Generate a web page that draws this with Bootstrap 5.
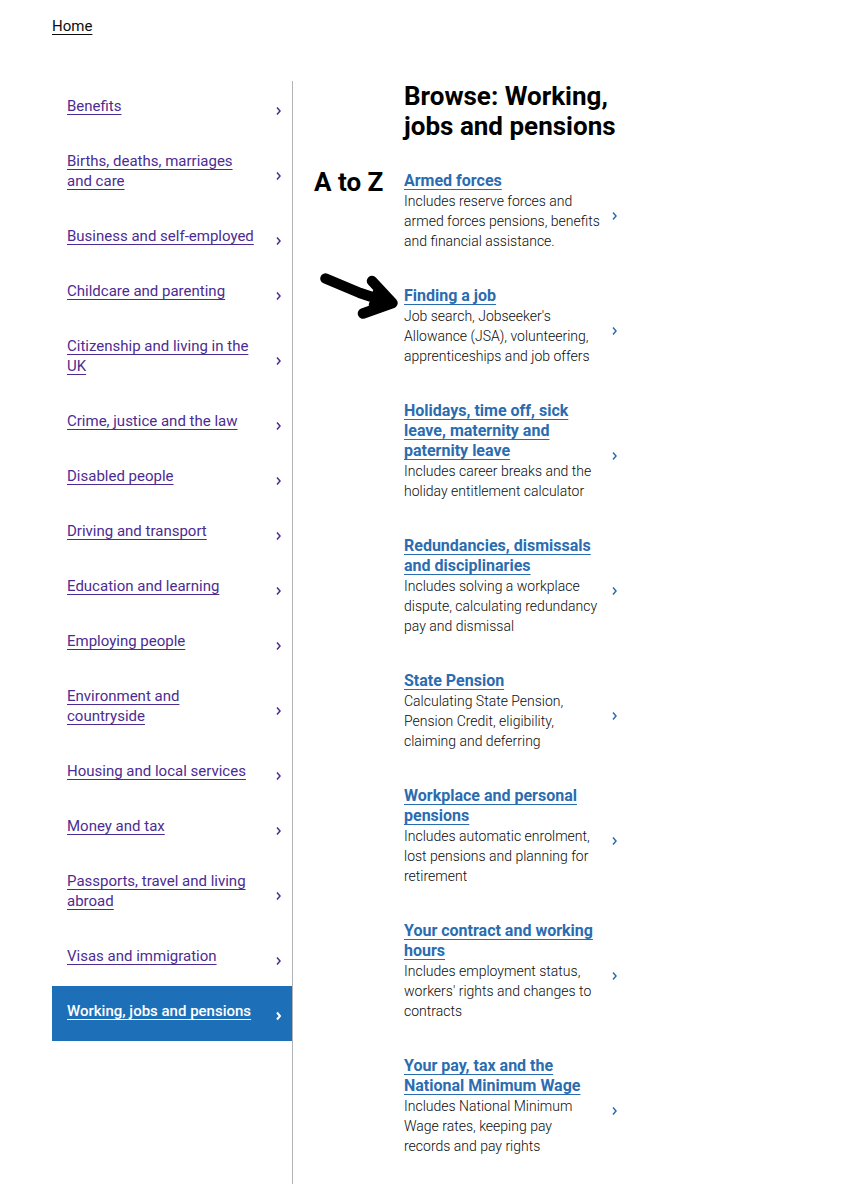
<!DOCTYPE html>
<html lang="en">
<head>
<meta charset="utf-8">
<meta name="viewport" content="width=device-width, initial-scale=1">
<title>Browse: Working, jobs and pensions</title>
<link href="https://cdn.jsdelivr.net/npm/bootstrap@5.3.0/dist/css/bootstrap.min.css" rel="stylesheet">
<style>
  body { font-family: Roboto, "Liberation Sans", sans-serif; font-size: 15px; line-height: 20px; color: #0b0c0c; background: #fff; }
  a { text-decoration: underline; text-decoration-thickness: 1px; text-underline-offset: 3px; text-decoration-skip-ink: none; }
  .crumbs { padding: 16px 52px 0; margin-bottom: 45px; }
  .crumbs a { color: #0b0c0c; }
  .browse { display: grid; grid-template-columns: minmax(0, 241fr) minmax(0, 111fr) minmax(0, 216fr) minmax(0, 225fr); margin-left: 52px; }
  .sections { border-right: 1px solid #b1b4b6; }
  .entry { display: flex; align-items: center; justify-content: space-between; padding: 15px 10px 20px 15px; }
  .entry svg { flex: none; width: 6px; height: 10px; margin-top: 10px; fill: none; stroke: currentColor; stroke-width: 1.5; }
  .sections .entry, .sections a { color: #4c2c92; }
  .sections .entry.current { background: #1d70b8; font-weight: 500; }
  .sections .current, .sections .current a { color: #fff; }
  .sections .current svg { stroke-width: 2; }
  .topics .entry { color: #2b6cb0; padding-left: 0; padding-right: 2px; }
  .topics a { color: #2b6cb0; font-size: 16px; font-weight: 700; }
  .topics p { color: #0b0c0c; font-size: 14px; font-weight: 300; white-space: nowrap; }
  .topics ul { padding-top: 15px; }
  .entry-text { min-width: 0; }
  h1, h2 { font-size: 26px; line-height: 30px; font-weight: 700; color: #000; }
  .aside-notes { padding: 86px 4px 0 21px; }
  .arrow { width: 82px; height: 50px; margin-top: 73px; margin-left: 4px; }
</style>
</head>
<body>
<nav class="crumbs" aria-label="Breadcrumb"><a href="#">Home</a></nav>
<main class="browse">
  <nav class="sections" aria-label="All topics">
    <ul class="list-unstyled mb-0">
      <li class="entry"><a href="#">Benefits</a><svg viewBox="0 0 6 10"><path d="M1 1.500 4 5 1 8.500"/></svg></li>
      <li class="entry"><a href="#">Births, deaths, marriages<br>and care</a><svg viewBox="0 0 6 10"><path d="M1 1.500 4 5 1 8.500"/></svg></li>
      <li class="entry"><a href="#">Business and self-employed</a><svg viewBox="0 0 6 10"><path d="M1 1.500 4 5 1 8.500"/></svg></li>
      <li class="entry"><a href="#">Childcare and parenting</a><svg viewBox="0 0 6 10"><path d="M1 1.500 4 5 1 8.500"/></svg></li>
      <li class="entry"><a href="#">Citizenship and living in the<br>UK</a><svg viewBox="0 0 6 10"><path d="M1 1.500 4 5 1 8.500"/></svg></li>
      <li class="entry"><a href="#">Crime, justice and the law</a><svg viewBox="0 0 6 10"><path d="M1 1.500 4 5 1 8.500"/></svg></li>
      <li class="entry"><a href="#">Disabled people</a><svg viewBox="0 0 6 10"><path d="M1 1.500 4 5 1 8.500"/></svg></li>
      <li class="entry"><a href="#">Driving and transport</a><svg viewBox="0 0 6 10"><path d="M1 1.500 4 5 1 8.500"/></svg></li>
      <li class="entry"><a href="#">Education and learning</a><svg viewBox="0 0 6 10"><path d="M1 1.500 4 5 1 8.500"/></svg></li>
      <li class="entry"><a href="#">Employing people</a><svg viewBox="0 0 6 10"><path d="M1 1.500 4 5 1 8.500"/></svg></li>
      <li class="entry"><a href="#">Environment and<br>countryside</a><svg viewBox="0 0 6 10"><path d="M1 1.500 4 5 1 8.500"/></svg></li>
      <li class="entry"><a href="#">Housing and local services</a><svg viewBox="0 0 6 10"><path d="M1 1.500 4 5 1 8.500"/></svg></li>
      <li class="entry"><a href="#">Money and tax</a><svg viewBox="0 0 6 10"><path d="M1 1.500 4 5 1 8.500"/></svg></li>
      <li class="entry"><a href="#">Passports, travel and living<br>abroad</a><svg viewBox="0 0 6 10"><path d="M1 1.500 4 5 1 8.500"/></svg></li>
      <li class="entry"><a href="#">Visas and immigration</a><svg viewBox="0 0 6 10"><path d="M1 1.500 4 5 1 8.500"/></svg></li>
      <li class="entry current"><a href="#" aria-current="page">Working, jobs and pensions</a><svg viewBox="0 0 6 10"><path d="M1 1.500 4 5 1 8.500"/></svg></li>
    </ul>
  </nav>
  <div class="aside-notes">
    <h2 class="mb-0 text-nowrap">A to Z</h2>
    <svg class="arrow" viewBox="0 0 82 50" fill="none" stroke="#000" stroke-width="10.5" stroke-linecap="round" stroke-linejoin="round"><path d="M7.500 8.500 42 23 66 31M54 11 74.500 33 45 43.500M60 22 66 33 56 35"/></svg>
  </div>
  <section class="topics pb-2">
    <h1 class="mb-0 text-nowrap">Browse: Working,<br>jobs and pensions</h1>
    <ul class="list-unstyled mb-0">
      <li class="entry"><div class="entry-text"><a href="#">Armed forces</a><p class="mb-0">Includes reserve forces and<br>armed forces pensions, benefits<br>and financial assistance.</p></div><svg viewBox="0 0 6 10"><path d="M1 1.500 4 5 1 8.500"/></svg></li>
      <li class="entry"><div class="entry-text"><a href="#">Finding a job</a><p class="mb-0">Job search, Jobseeker's<br>Allowance (JSA), volunteering,<br>apprenticeships and job offers</p></div><svg viewBox="0 0 6 10"><path d="M1 1.500 4 5 1 8.500"/></svg></li>
      <li class="entry"><div class="entry-text"><a href="#">Holidays, time off, sick<br>leave, maternity and<br>paternity leave</a><p class="mb-0">Includes career breaks and the<br>holiday entitlement calculator</p></div><svg viewBox="0 0 6 10"><path d="M1 1.500 4 5 1 8.500"/></svg></li>
      <li class="entry"><div class="entry-text"><a href="#">Redundancies, dismissals<br>and disciplinaries</a><p class="mb-0">Includes solving a workplace<br>dispute, calculating redundancy<br>pay and dismissal</p></div><svg viewBox="0 0 6 10"><path d="M1 1.500 4 5 1 8.500"/></svg></li>
      <li class="entry"><div class="entry-text"><a href="#">State Pension</a><p class="mb-0">Calculating State Pension,<br>Pension Credit, eligibility,<br>claiming and deferring</p></div><svg viewBox="0 0 6 10"><path d="M1 1.500 4 5 1 8.500"/></svg></li>
      <li class="entry"><div class="entry-text"><a href="#">Workplace and personal<br>pensions</a><p class="mb-0">Includes automatic enrolment,<br>lost pensions and planning for<br>retirement</p></div><svg viewBox="0 0 6 10"><path d="M1 1.500 4 5 1 8.500"/></svg></li>
      <li class="entry"><div class="entry-text"><a href="#">Your contract and working<br>hours</a><p class="mb-0">Includes employment status,<br>workers' rights and changes to<br>contracts</p></div><svg viewBox="0 0 6 10"><path d="M1 1.500 4 5 1 8.500"/></svg></li>
      <li class="entry"><div class="entry-text"><a href="#">Your pay, tax and the<br>National Minimum Wage</a><p class="mb-0">Includes National Minimum<br>Wage rates, keeping pay<br>records and pay rights</p></div><svg viewBox="0 0 6 10"><path d="M1 1.500 4 5 1 8.500"/></svg></li>
    </ul>
  </section>
</main>
<script src="https://cdn.jsdelivr.net/npm/bootstrap@5.3.0/dist/js/bootstrap.bundle.min.js"></script>
</body>
</html>
